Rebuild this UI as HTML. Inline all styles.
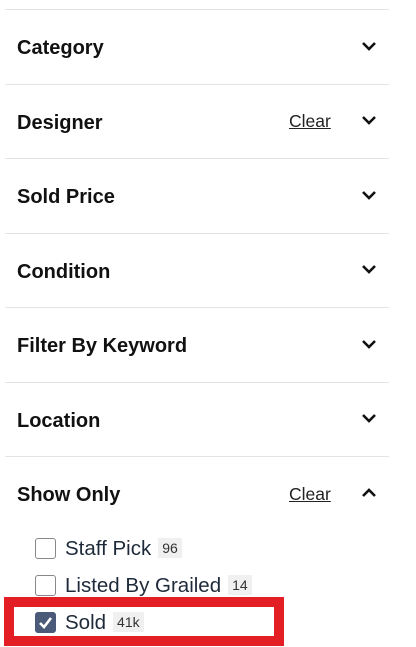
<!DOCTYPE html>
<html><head><style>
body{margin:0;width:416px;height:647px;background:#fff;font-family:"Liberation Sans",Arial,sans-serif;position:relative;overflow:hidden}
.line{position:absolute;left:5px;width:384px;height:1px;background:#e3e3e3}
.t{position:absolute;left:17px;font-size:20px;font-weight:bold;color:#111;line-height:22px}
.clear{position:absolute;left:289px;font-size:17.5px;color:#222;text-decoration:underline}
.chev{position:absolute;left:361px;width:16px;height:10px}
.cb{position:absolute;left:35px;width:19px;height:19px;border:1px solid #888;border-radius:3px;background:#fff}
.lab{position:absolute;left:65px;font-size:20.5px;color:#1e2a3a;line-height:22px}
.badge{display:inline-block;background:#f0f0f0;font-size:14px;color:#333;padding:2px 4px;margin-left:7px;vertical-align:2px;line-height:16px}
.red{position:absolute;left:4px;top:597px;width:260px;height:29px;border:10px solid #e31e24}
</style></head><body>
<div class="line" style="top:9px"></div>
<div class="line" style="top:84px"></div>
<div class="line" style="top:158px"></div>
<div class="line" style="top:233px"></div>
<div class="line" style="top:307px"></div>
<div class="line" style="top:382px"></div>
<div class="line" style="top:456px"></div>

<div class="t" style="top:37px">Category</div>
<div class="t" style="top:112px">Designer</div>
<div class="t" style="top:186px">Sold Price</div>
<div class="t" style="top:261px">Condition</div>
<div class="t" style="top:335px">Filter By Keyword</div>
<div class="t" style="top:410px">Location</div>
<div class="t" style="top:484px">Show Only</div>
<div class="clear" style="top:111px">Clear</div>
<div class="clear" style="top:484px">Clear</div>

<svg class="chev" style="top:41px" viewBox="0 0 16 10"><path d="M2 2l6 6 6-6" fill="none" stroke="#111" stroke-width="2.6"/></svg>
<svg class="chev" style="top:115px" viewBox="0 0 16 10"><path d="M2 2l6 6 6-6" fill="none" stroke="#111" stroke-width="2.6"/></svg>
<svg class="chev" style="top:190px" viewBox="0 0 16 10"><path d="M2 2l6 6 6-6" fill="none" stroke="#111" stroke-width="2.6"/></svg>
<svg class="chev" style="top:264px" viewBox="0 0 16 10"><path d="M2 2l6 6 6-6" fill="none" stroke="#111" stroke-width="2.6"/></svg>
<svg class="chev" style="top:339px" viewBox="0 0 16 10"><path d="M2 2l6 6 6-6" fill="none" stroke="#111" stroke-width="2.6"/></svg>
<svg class="chev" style="top:413px" viewBox="0 0 16 10"><path d="M2 2l6 6 6-6" fill="none" stroke="#111" stroke-width="2.6"/></svg>
<svg class="chev" style="top:488px" viewBox="0 0 16 10"><path d="M2 8l6-6 6 6" fill="none" stroke="#111" stroke-width="2.6"/></svg>

<div class="red"></div>
<div class="cb" style="top:538px"></div>
<div class="lab" style="top:538px">Staff Pick<span class="badge">96</span></div>
<div class="cb" style="top:575px"></div>
<div class="lab" style="top:575px">Listed By Grailed<span class="badge">14</span></div>
<div class="cb" style="top:612px;background:#4a5a78;border-color:#4a5a78"><svg width="19" height="19" viewBox="0 0 19 19"><path d="M4 10l4 4 7-9" fill="none" stroke="#fff" stroke-width="2.6"/></svg></div>
<div class="lab" style="top:612px">Sold<span class="badge">41k</span></div>
</body></html>
